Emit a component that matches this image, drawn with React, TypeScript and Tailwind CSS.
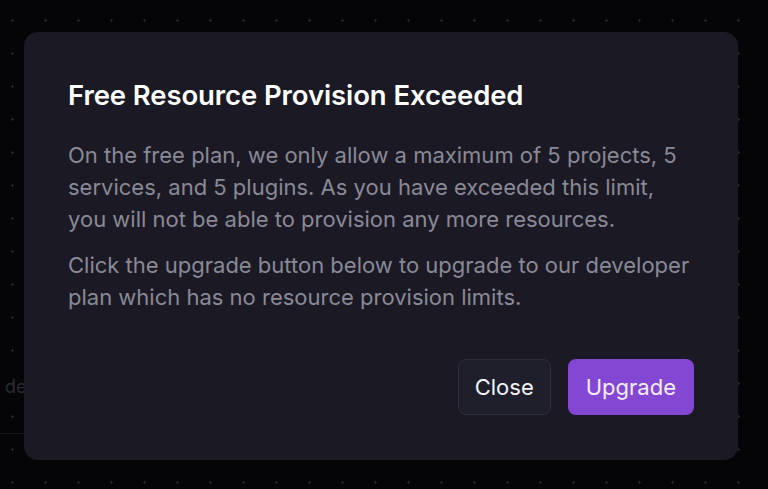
import React from 'react'

// ── Background grid of faint dots ────────────────────────────────────────────

function DotGrid() {
  return (
    <div
      className="absolute inset-0"
      style={{
        backgroundImage: 'radial-gradient(circle, #26262c 1px, transparent 1.2px)',
        backgroundSize: '33px 33px',
        backgroundPosition: '-4px 4px',
      }}
    />
  )
}

// ── Dialog ───────────────────────────────────────────────────────────────────

function ProvisionDialog() {
  return (
    <div className="relative w-[714px] h-[428px] rounded-[14px] bg-[#1a1924] px-[44px] pt-[47px] pb-[45px] flex flex-col">
      <h2 className="text-[27.5px] leading-[32px] font-semibold text-white tracking-[-0.1px]">
        Free Resource Provision Exceeded
      </h2>

      <div className="mt-[28px] text-[22px] leading-[32px] text-[#8a8996]">
        <p>
          On the free plan, we only allow a maximum of 5 projects, 5 services, and 5 plugins. As you have
          exceeded this limit, you will not be able to provision any more resources.
        </p>
        <p className="mt-[14px]">
          Click the upgrade button below to upgrade to our developer plan which has no resource provision limits.
        </p>
      </div>

      <div className="mt-auto flex justify-end gap-[17px]">
        <button className="h-[56px] px-[16px] rounded-[8px] bg-[#1f1f2b] border border-[#2f2f3b] text-[22px] text-[#f2f2f5]">
          Close
        </button>
        <button className="h-[56px] px-[18px] rounded-[8px] bg-[#8347d4] text-[22px] text-[#f4eefc]">
          Upgrade
        </button>
      </div>
    </div>
  )
}

export default function App() {
  return (
    <div
      className="relative w-[768px] h-[489px] overflow-hidden bg-[#050507]"
      style={{ fontFamily: 'Inter, "Noto Sans", sans-serif' }}
    >
      <DotGrid />
      {/* faint page content behind the overlay */}
      <span className="absolute left-[5px] top-[373px] text-[18px] text-[#2a2a30]">de</span>
      <div className="absolute left-0 top-[433px] w-[24px] border-t border-[#15151a]" />

      <div className="relative pt-[32px] pl-[24px]">
        <ProvisionDialog />
      </div>
    </div>
  )
}
